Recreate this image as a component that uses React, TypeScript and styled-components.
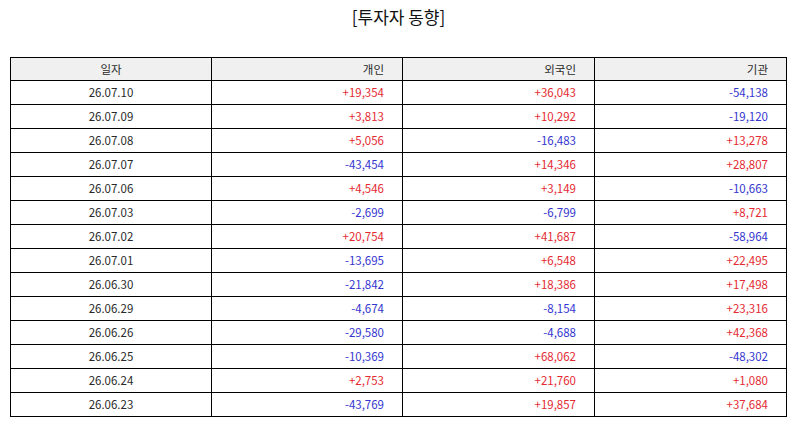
import React from "react";
import styled, { createGlobalStyle } from "styled-components";

const Global = createGlobalStyle`
  html, body { margin: 0; padding: 0; background: #fff; }
  body { font-family: "Noto Sans CJK KR", "Noto Sans", sans-serif; }
`;

const Page = styled.div`
  width: 794px;
  height: 425px;
  box-sizing: border-box;
  padding: 0 9px 0 10px;
  display: flex;
  flex-direction: column;
`;

const Title = styled.h1`
  margin: 0;
  height: 57px;
  padding-top: 5px;
  box-sizing: border-box;
  font-size: 17px;
  font-weight: 400;
  line-height: 24px;
  text-align: center;
  color: #111;
  padding-left: 2px;
`;

const Table = styled.table`
  border-collapse: collapse;
  width: 776px;
  table-layout: fixed;
  font-size: 11.5px;
  color: #2a2a2a;
`;

const HeadCell = styled.th<{ $align: "center" | "right" }>`
  height: 22px;
  padding: 0 ${(p) => (p.$align === "right" ? "18px" : "0")} 0 0;
  border: 1px solid #000;
  background: #f0f0f0;
  font-weight: 400;
  text-align: ${(p) => p.$align};
  line-height: 22px;
  box-sizing: border-box;
`;

const Cell = styled.td<{ $align: "center" | "right"; $tone?: "up" | "down" }>`
  height: 23px;
  padding: 0 ${(p) => (p.$align === "right" ? "18px" : "0")} 0 0;
  border: 1px solid #000;
  text-align: ${(p) => p.$align};
  line-height: 23px;
  color: ${(p) => (p.$tone === "up" ? "#e42a32" : p.$tone === "down" ? "#3535d0" : "#2a2a2a")};
  box-sizing: border-box;
`;

const rows: [string, string, string, string][] = [
  ["26.07.10", "+19,354", "+36,043", "-54,138"],
  ["26.07.09", "+3,813", "+10,292", "-19,120"],
  ["26.07.08", "+5,056", "-16,483", "+13,278"],
  ["26.07.07", "-43,454", "+14,346", "+28,807"],
  ["26.07.06", "+4,546", "+3,149", "-10,663"],
  ["26.07.03", "-2,699", "-6,799", "+8,721"],
  ["26.07.02", "+20,754", "+41,687", "-58,964"],
  ["26.07.01", "-13,695", "+6,548", "+22,495"],
  ["26.06.30", "-21,842", "+18,386", "+17,498"],
  ["26.06.29", "-4,674", "-8,154", "+23,316"],
  ["26.06.26", "-29,580", "-4,688", "+42,368"],
  ["26.06.25", "-10,369", "+68,062", "-48,302"],
  ["26.06.24", "+2,753", "+21,760", "+1,080"],
  ["26.06.23", "-43,769", "+19,857", "+37,684"],
];

const tone = (v: string) => (v.startsWith("-") ? "down" : "up");

export default function App() {
  return (
    <>
      <Global />
      <Page>
        <Title>[투자자 동향]</Title>
        <Table>
          <colgroup>
            <col style={{ width: 201 }} />
            <col style={{ width: 191 }} />
            <col style={{ width: 192 }} />
            <col style={{ width: 192 }} />
          </colgroup>
          <thead>
            <tr>
              <HeadCell $align="center">일자</HeadCell>
              <HeadCell $align="right">개인</HeadCell>
              <HeadCell $align="right">외국인</HeadCell>
              <HeadCell $align="right">기관</HeadCell>
            </tr>
          </thead>
          <tbody>
            {rows.map(([d, a, b, c]) => (
              <tr key={d}>
                <Cell $align="center">{d}</Cell>
                <Cell $align="right" $tone={tone(a)}>{a}</Cell>
                <Cell $align="right" $tone={tone(b)}>{b}</Cell>
                <Cell $align="right" $tone={tone(c)}>{c}</Cell>
              </tr>
            ))}
          </tbody>
        </Table>
      </Page>
    </>
  );
}
